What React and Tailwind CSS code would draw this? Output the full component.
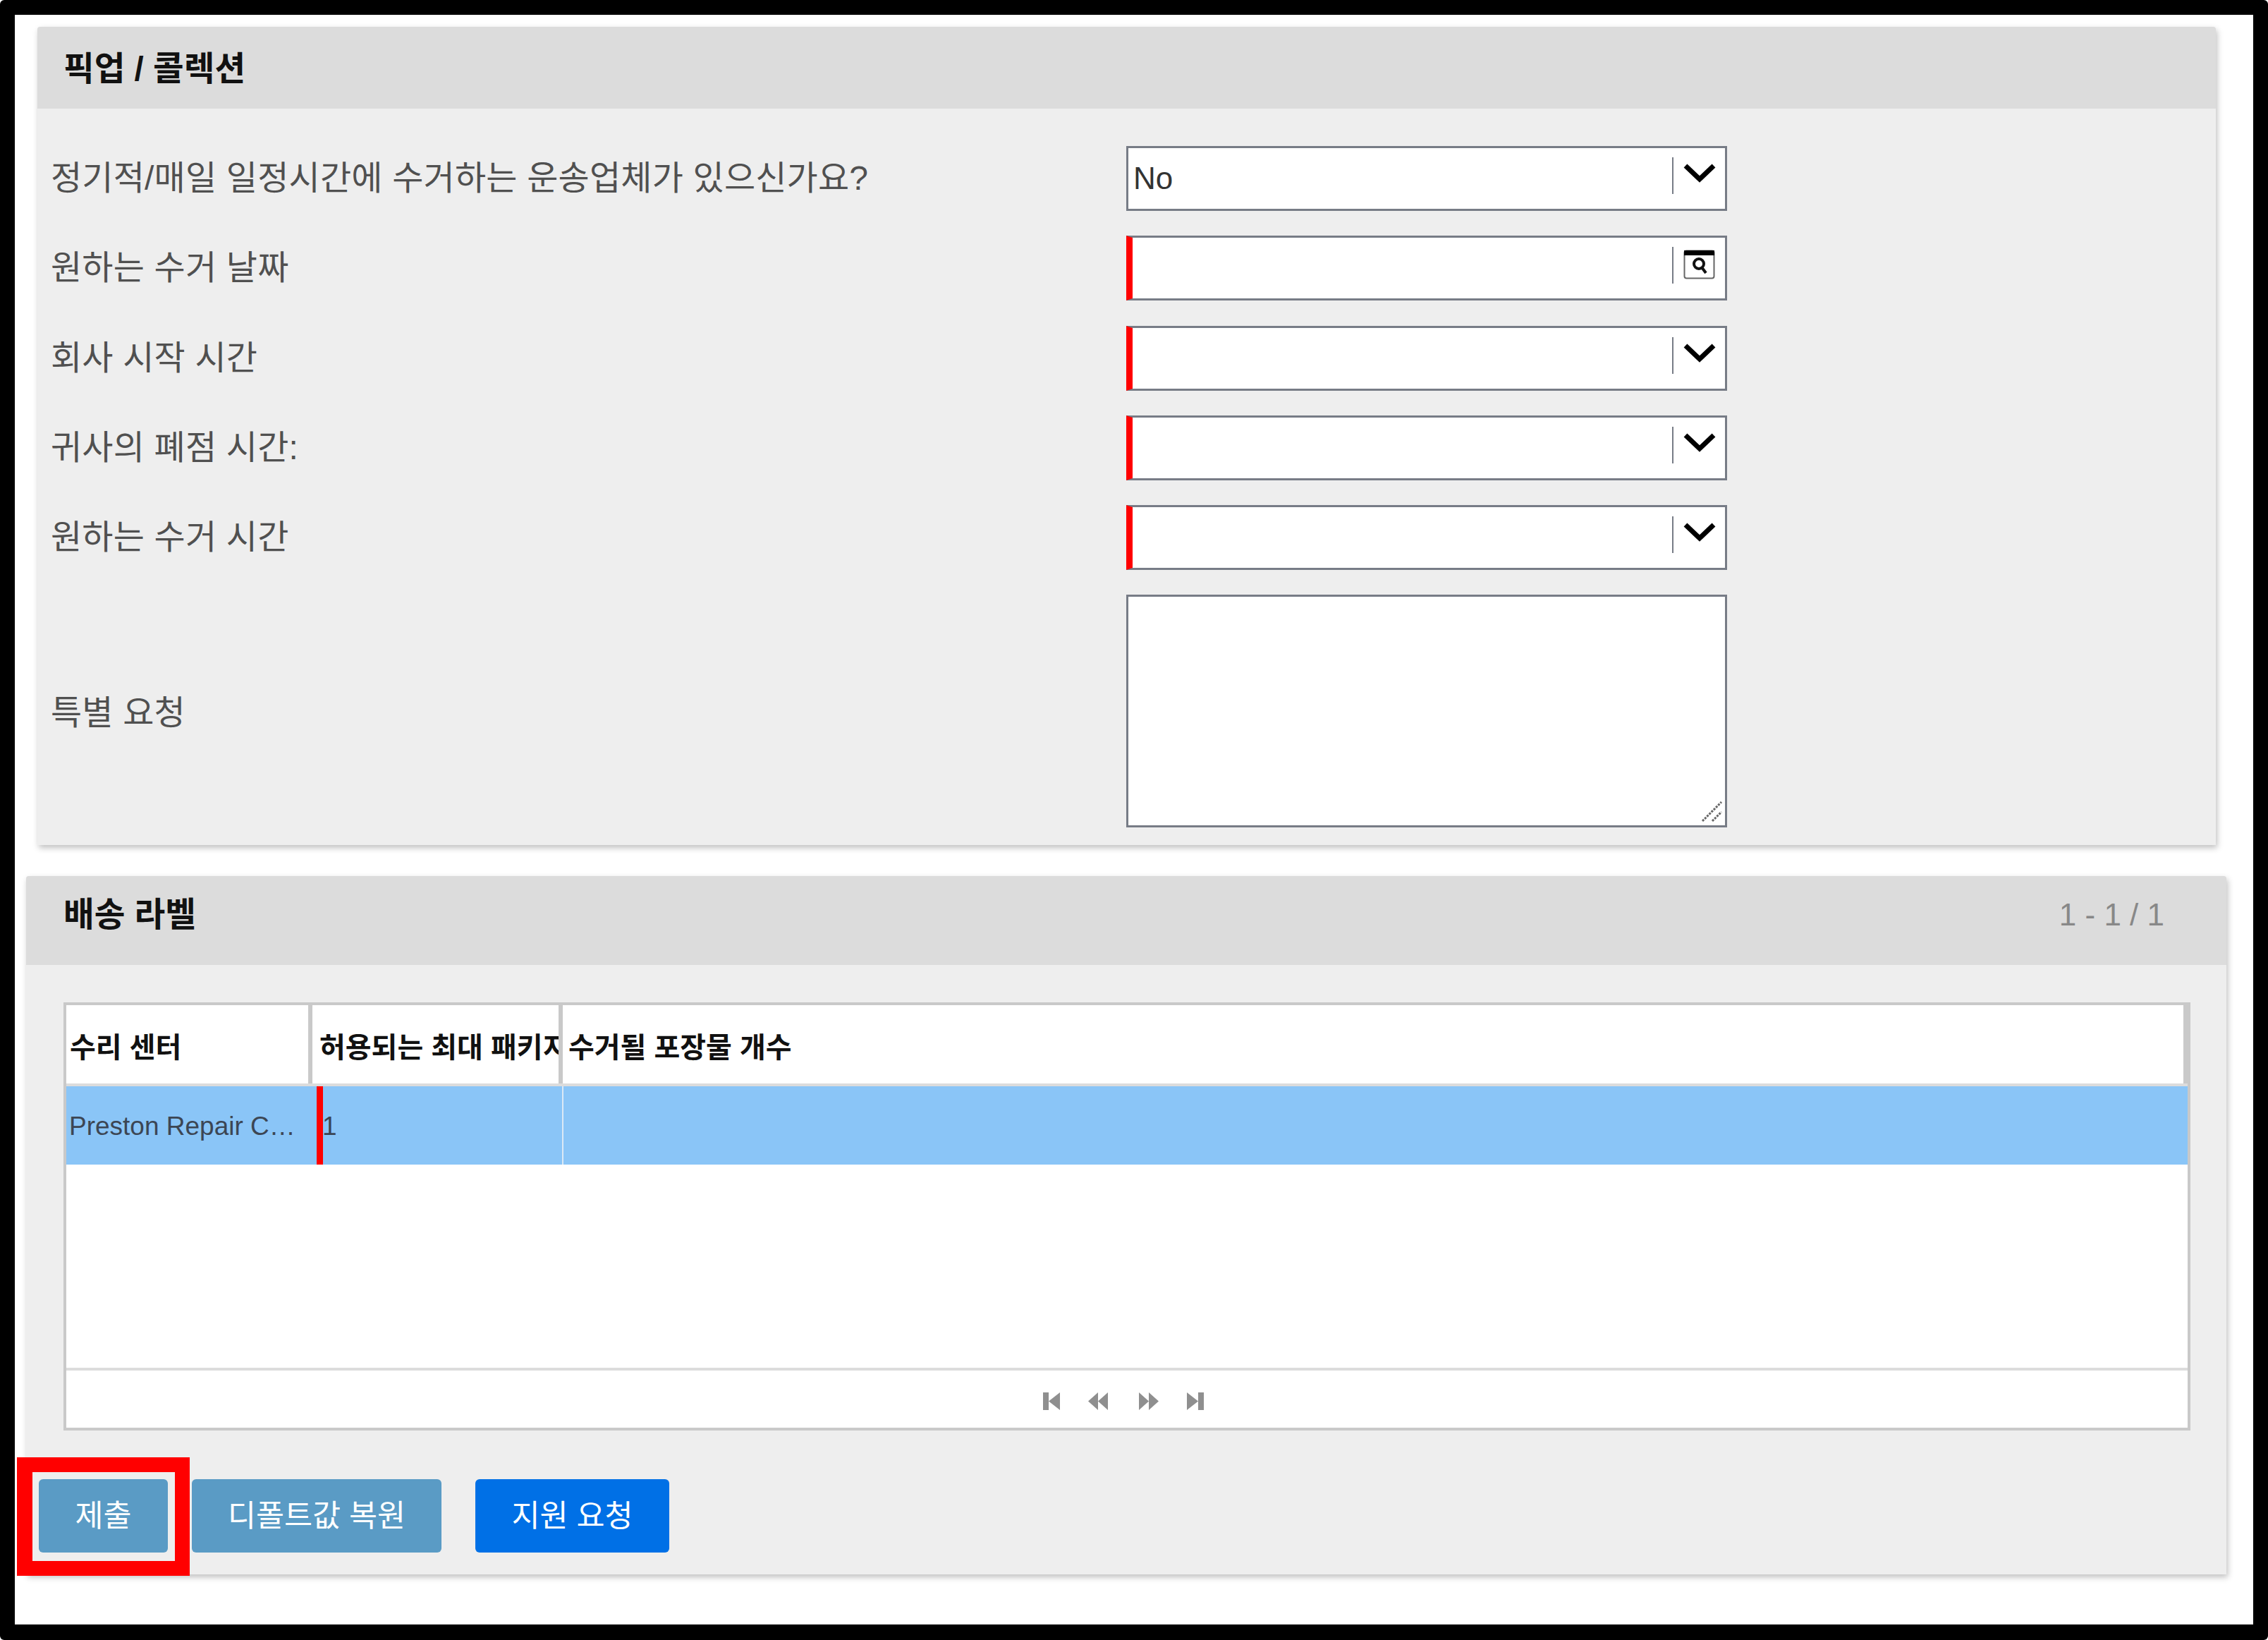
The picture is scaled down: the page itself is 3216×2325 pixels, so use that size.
import React from "react";

const Chevron = () => (
  <svg width="46" height="28" viewBox="0 0 46 28" className="shrink-0">
    <path d="M3 4 L23 23 L43 4" fill="none" stroke="#000" strokeWidth="7" />
  </svg>
);

const Calendar = () => (
  <svg width="45" height="42" viewBox="0 0 45 42" className="shrink-0">
    <rect x="1.5" y="1.5" width="42" height="39" rx="3" fill="#fff" stroke="#666" strokeWidth="2" />
    <rect x="1" y="1" width="43" height="7" fill="#000" />
    <circle cx="22" cy="20" r="7" fill="none" stroke="#111" strokeWidth="4" />
    <path d="M26 25 L32 33" stroke="#111" strokeWidth="4" />
  </svg>
);

function Field({ required, value, icon }) {
  return (
    <div
      className={`flex h-[92px] w-[852px] items-start border-[3px] border-[#777c86] bg-white ${
        required ? "border-l-[9px] border-l-[#ff0000]" : ""
      }`}
    >
      <div className={`h-full flex-1 pt-[18px] text-[44px] leading-[50px] text-[#333] ${required ? "pl-0" : "pl-[7px]"}`}>
        {value}
      </div>
      <div className="mt-[13px] h-[52px] w-[2px] bg-[#777c86]" />
      <div className="flex w-[73px] justify-center pt-[20px]">
        {icon === "cal" ? <div className="-mt-[3px]"><Calendar /></div> : <div className="mt-[1px]"><Chevron /></div>}
      </div>
    </div>
  );
}

function FormRow({ label, children, tall }) {
  return (
    <div className={`flex items-center ${tall ? "h-[330px]" : "h-[92px]"}`}>
      <div className={`-ml-[2px] mr-[2px] w-[1523px] text-[48px] leading-[60px] tracking-[0.2px] text-[#505050] ${tall ? "pt-[6px]" : ""}`}>{label}</div>
      {children}
    </div>
  );
}

const PagerIcon = ({ d, w }) => (
  <svg width={w} height="25" viewBox={`0 0 ${w} 25`}>
    <path d={d} fill="#8f8f8f" />
  </svg>
);

export default function App() {
  return (
    <div className="h-[2325px] w-[3216px] overflow-hidden rounded-[6px] bg-black pt-[21px] pr-[21px] pb-[22px] pl-[21px] font-['Liberation_Sans','Noto_Sans_CJK_KR',sans-serif]">
      <div className="relative h-full w-full bg-white pt-[17px]">
        {/* pickup panel */}
        <section className="ml-[32px] mr-[53px] h-[1160px] rounded-t-[4px] bg-[#eeeeee] shadow-[2px_4px_8px_rgba(0,0,0,0.25)]">
          <header className="flex h-[116px] items-center rounded-t-[4px] bg-[#dcdcdc] pl-[37px]">
            <h2 className="translate-y-[2px] text-[47.5px] font-bold leading-[60px] text-[#111]">픽업 / 콜렉션</h2>
          </header>
          <div className="flex flex-col gap-[35.25px] pt-[53px] pl-[21px]">
            <FormRow label="정기적/매일 일정시간에 수거하는 운송업체가 있으신가요?">
              <Field value="No" />
            </FormRow>
            <FormRow label="원하는 수거 날짜">
              <Field required icon="cal" />
            </FormRow>
            <FormRow label="회사 시작 시간">
              <Field required />
            </FormRow>
            <FormRow label="귀사의 폐점 시간:">
              <Field required />
            </FormRow>
            <FormRow label="원하는 수거 시간">
              <Field required />
            </FormRow>
            <FormRow label="특별 요청" tall>
              <div className="relative h-[330px] w-[852px] border-[3px] border-[#777c86] bg-white">
                <svg width="30" height="30" viewBox="0 0 30 30" className="absolute right-[3px] bottom-[4px]">
                  <path d="M1 28 L28 1 M15 28 L28 15" stroke="#666" strokeWidth="3" strokeDasharray="3 1.5" fill="none" />
                </svg>
              </div>
            </FormRow>
          </div>
        </section>

        {/* labels panel */}
        <section className="mt-[44px] ml-[16px] mr-[38px] h-[990px] rounded-t-[4px] bg-[#eeeeee] shadow-[2px_4px_8px_rgba(0,0,0,0.25)]">
          <header className="flex h-[126px] items-center justify-between rounded-t-[4px] bg-[#dcdcdc] pr-[88px] pl-[53px]">
            <h2 className="-translate-y-[8px] text-[47.5px] font-bold leading-[60px] text-[#111]">배송 라벨</h2>
            <span className="-translate-y-[8px] text-[44px] leading-[60px] text-[#888]">1 - 1 / 1</span>
          </header>

          <div className="pt-[53px] pr-[51px] pl-[53px]">
            <div className="flex h-[607px] flex-col border-[4px] border-[#c9c9c9] bg-white">
              <div className="flex h-[111px] text-[40px] font-bold leading-[50px] text-[#111]">
                <div className="flex w-[343px] items-center overflow-hidden whitespace-nowrap pl-[5px] pt-[8px]">수리 센터</div>
                <div className="w-[6px] bg-[#c9c9c9]" />
                <div className="flex w-[349px] items-center overflow-hidden whitespace-nowrap pl-[10px] pt-[8px]">허용되는 최대 패키지</div>
                <div className="w-[6px] bg-[#c9c9c9]" />
                <div className="flex flex-1 items-center whitespace-nowrap pl-[8px] pt-[8px]">수거될 포장물 개수</div>
                <div className="w-[6px] bg-[#c9c9c9]" />
              </div>
              <div className="h-[4px] bg-[#dcdcdc]" />
              <div className="flex h-[111px] bg-[#8ac5f7] pr-[3px] text-[37px] leading-[113px] text-[#3c4654]">
                <div className="w-[355px] truncate pr-[20px] pl-[4px]">Preston Repair Center</div>
                <div className="w-[9px] shrink-0 bg-[#ff0000]" />
                <div className="w-[339px] shrink-0 -translate-x-[1px]">1</div>
                <div className="w-[2px] shrink-0 bg-[#dbe9f5]" />
                <div className="flex-1" />
              </div>
              <div className="flex-1" />
              <div className="h-[4px] bg-[#dcdcdc]" />
              <div className="flex h-[81px] items-center justify-center pt-[5px]">
                <div className="-ml-[10px] flex items-center gap-[40px]">
                  <PagerIcon w={24} d="M0 0H8V25H0Z M24 0V25L8 12.5Z" />
                  <div className="flex items-center gap-[44px]">
                    <PagerIcon w={28} d="M14 0V25L0 12.5Z M28 0V25L14 12.5Z" />
                    <PagerIcon w={28} d="M0 0V25L14 12.5Z M14 0V25L28 12.5Z" />
                  </div>
                  <PagerIcon w={24} d="M16 0H24V25H16Z M0 0V25L16 12.5Z" />
                </div>
              </div>
            </div>
          </div>

          <div className="mt-[69px] flex items-start pl-[18px] text-[43.5px] leading-[100px] text-white">
            <button className="h-[104px] w-[183px] rounded-[6px] bg-[#5a9bc5]">제출</button>
            <button className="ml-[34px] h-[104px] w-[354px] rounded-[6px] bg-[#5a9bc5]">디폴트값 복원</button>
            <button className="ml-[48px] h-[104px] w-[275px] rounded-[6px] bg-[#0070e6]">지원 요청</button>
          </div>
        </section>

        {/* annotation */}
        <div className="absolute left-[3px] top-[2045px] h-[168px] w-[245px] border-[21px] border-l-[22px] border-[#ff0000]" />
      </div>
    </div>
  );
}
